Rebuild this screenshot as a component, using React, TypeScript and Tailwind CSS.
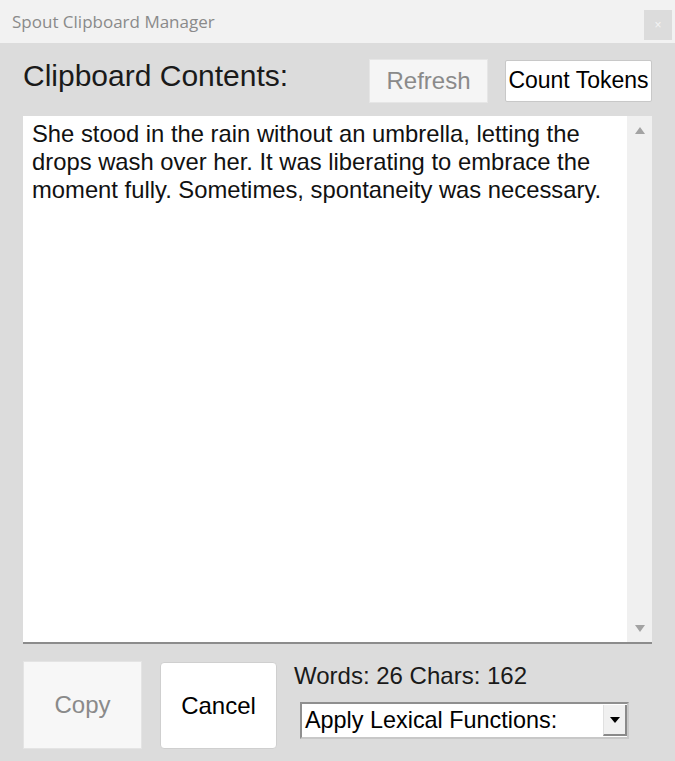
import React from "react";

export default function App() {
  const arial = { fontFamily: '"Liberation Sans", Arial, sans-serif' };
  return (
    <div className="w-[675px] h-[761px] bg-[#dcdcdc] flex flex-col overflow-hidden" style={arial}>
      {/* Title bar */}
      <div className="h-[43px] bg-[#f2f2f2] flex items-start justify-between pl-[12px] pr-[3px] shrink-0">
        <span className="text-[17px] text-[#8a8a8a] mt-[9px]" style={{ fontFamily: '"Open Sans", "Noto Sans", sans-serif' }}>
          Spout Clipboard Manager
        </span>
        <div className="w-[28px] h-[30px] bg-[#dcdcdc] flex items-center justify-center text-[12px] text-[#f4f4f4] mt-[10px]">
          ×
        </div>
      </div>

      <div className="flex flex-col px-[23px] flex-1">
        {/* Header row */}
        <div className="flex items-center h-[73px] pt-[2px]">
          <div className="text-[30px] text-[#1a1a1a] flex-1 -mt-[11px] whitespace-nowrap">Clipboard Contents:</div>
          <div className="w-[119px] h-[44px] bg-[#f5f5f5] border border-[#e6e6e6] flex items-center justify-center text-[24px] text-[#8a8a8a] mr-[17px]">
            Refresh
          </div>
          <div className="w-[147px] h-[42px] bg-white border border-[#c8c8c8] rounded-[2px] flex items-center justify-center text-[23px] text-black whitespace-nowrap">
            Count Tokens
          </div>
        </div>

        {/* Text area */}
        <div className="h-[528px] bg-white flex border-b-2 border-[#8c8c8c]">
          <div className="flex-1 text-[23.8px] leading-[28px] text-[#111] pl-[9px] pt-[4px] pr-[2px]">
            She stood in the rain without an umbrella, letting the drops wash over her. It was liberating to embrace the moment fully. Sometimes, spontaneity was necessary.
          </div>
          <div className="w-[25px] bg-[#f0f0f0] flex flex-col items-center justify-between py-[8px]">
            <div className="w-0 h-0 border-l-[5px] border-r-[5px] border-b-[7px] border-l-transparent border-r-transparent border-b-[#a3a3a3] mt-[3px]" />
            <div className="w-0 h-0 border-l-[5px] border-r-[5px] border-t-[7px] border-l-transparent border-r-transparent border-t-[#a3a3a3] mb-[2px]" />
          </div>
        </div>

        {/* Bottom row */}
        <div className="flex pt-[17px]">
          <div className="w-[119px] h-[88px] bg-[#f7f7f7] border border-[#e4e4e4] flex items-center justify-center text-[24px] text-[#8a8a8a]">
            Copy
          </div>
          <div className="w-[117px] h-[87px] bg-white border border-[#cfcfcf] rounded-[4px] flex items-center justify-center text-[24px] text-black ml-[18px] mt-[1px]">
            Cancel
          </div>
          <div className="flex flex-col ml-[17px]">
            <div className="text-[24px] text-[#1a1a1a] leading-[28px] mt-[1px]">Words: 26 Chars: 162</div>
            <div className="ml-[6px] mt-[12px] w-[329px] h-[37px] bg-white border-2 border-[#8f8f8f] border-r-[#c8c8c8] border-b-[#c8c8c8] flex items-center">
              <span className="flex-1 text-[23.4px] text-black pl-[3px] leading-none">Apply Lexical Functions:</span>
              <div className="w-[24px] h-[31px] bg-[#f0f0f0] border-r-2 border-b-2 border-[#8a8a8a] border-l border-l-[#e0e0e0] flex items-center justify-center">
                <div className="w-0 h-0 border-l-[5px] border-r-[5px] border-t-[6px] border-l-transparent border-r-transparent border-t-black" />
              </div>
            </div>
          </div>
        </div>
      </div>
    </div>
  );
}
